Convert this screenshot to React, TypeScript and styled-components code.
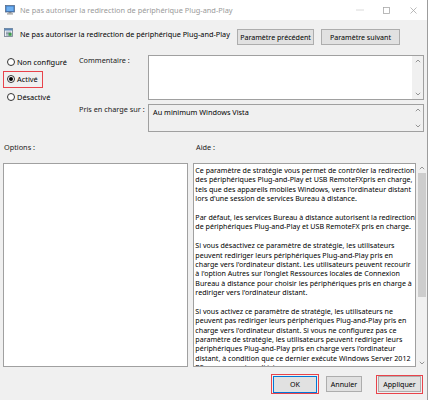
import styled, { createGlobalStyle } from "styled-components";

const GlobalStyle = createGlobalStyle`
  html, body {
    margin: 0;
    padding: 0;
    background: #ffffff;
  }
  body {
    font-family: "Noto Sans", "Open Sans", sans-serif;
    font-size: 7.1px;
    color: #000;
  }
  * {
    box-sizing: border-box;
  }
`;

const Window = styled.div`
  width: 428px;
  height: 400px;
  background: #f0f0f0;
  border-right: 1px solid #9c9c9c;
  display: flex;
  flex-direction: column;
  overflow: hidden;
`;

const TitleBar = styled.div`
  height: 20px;
  flex: none;
  background: #ffffff;
  display: flex;
  align-items: center;
  padding-left: 5px;
`;

const TitleText = styled.span`
  margin-left: 5px;
  color: #9a9a9a;
  font-size: 7.4px;
  flex: 1;
  white-space: nowrap;
`;

const Control = styled.div`
  width: 27px;
  height: 20px;
  display: flex;
  align-items: center;
  justify-content: center;
`;

const HeaderRow = styled.div`
  height: 34px;
  flex: none;
  display: flex;
  align-items: flex-start;
  padding: 8px 0 0 4px;
`;

const PolicyName = styled.span`
  margin-left: 7px;
  margin-top: 0.5px;
  font-size: 7.3px;
  white-space: nowrap;
  flex: 1;
`;

const NavButtons = styled.div`
  display: flex;
  gap: 7px;
  margin-top: 1px;
  margin-right: 27px;
`;

const Button = styled.button<{ $w: number; $default?: boolean }>`
  width: ${(p) => p.$w}px;
  height: ${(p) => (p.$default ? 17 : 16)}px;
  padding: 0;
  font-family: inherit;
  font-size: 7.1px;
  color: #000;
  background: #e1e1e1;
  border: 1px solid ${(p) => (p.$default ? "#0078d7" : "#adadad")};
  display: flex;
  align-items: center;
  justify-content: center;
  white-space: nowrap;
`;

const Upper = styled.div`
  display: grid;
  grid-template-columns: 79px 69px 276px;
  grid-template-rows: 45px 28px;
  row-gap: 4px;
  padding-top: 1px;
`;

const RadioList = styled.div`
  grid-row: 1 / span 2;
  display: flex;
  flex-direction: column;
  margin-top: -2px;
`;

const RadioItem = styled.label<{ $marked?: boolean }>`
  display: flex;
  align-items: center;
  width: fit-content;
  height: 17.5px;
  margin-left: 3px;
  padding: 0 4.5px 0 2.5px;
  border: 1.5px solid ${(p) => (p.$marked ? "#e8434b" : "transparent")};
  white-space: nowrap;
  font-size: 7.4px;
`;

const RadioDot = styled.span<{ $on?: boolean }>`
  width: 8px;
  height: 8px;
  margin-right: 2.5px;
  border-radius: 50%;
  border: 1px solid #333;
  background: #fff;
  display: flex;
  align-items: center;
  justify-content: center;
  &::after {
    content: "";
    width: 4px;
    height: 4px;
    border-radius: 50%;
    background: ${(p) => (p.$on ? "#000" : "transparent")};
  }
`;

const FieldLabel = styled.div`
  font-size: 7.3px;
  white-space: nowrap;
  color: #1a1a1a;
`;

const Field = styled.div<{ $readonly?: boolean }>`
  display: flex;
  background: ${(p) => (p.$readonly ? "#f0f0f0" : "#ffffff")};
  border: 1px solid #a0a0a0;
`;

const FieldText = styled.div`
  flex: 1;
  padding: 2px 4px;
  font-size: 7.3px;
`;

const ScrollBar = styled.div`
  width: 11px;
  flex: none;
  background: #f0f0f0;
  display: flex;
  flex-direction: column;
  align-items: center;
  justify-content: space-between;
  padding: 3px 0;
`;

const Thumb = styled.div`
  width: 8px;
  height: 124px;
  margin-top: 3px;
  background: #cdcdcd;
`;

const SectionLabels = styled.div`
  display: flex;
  padding: 10px 0 0 4px;
  height: 31px;
  flex: none;
  font-size: 7.3px;
  color: #1a1a1a;
`;

const OptionsLabel = styled.span`
  width: 192px;
`;

const Lower = styled.div`
  display: flex;
  gap: 5px;
  padding-left: 3px;
  height: 204px;
  flex: none;
`;

const OptionsBox = styled.div`
  width: 187px;
  background: #ffffff;
  border: 1px solid #a0a0a0;
`;

const HelpPanel = styled.div`
  flex: 1;
  display: flex;
`;

const HelpBox = styled.div`
  flex: 1;
  background: #ffffff;
  border: 1px solid #a0a0a0;
  padding: 2px 0 0 1.5px;
  overflow: hidden;
`;

const HelpLine = styled.div`
  height: 9.4px;
  line-height: 9.4px;
  white-space: nowrap;
  font-size: 7.1px;
`;

const HelpScroll = styled.div`
  width: 11px;
  display: flex;
  flex-direction: column;
  align-items: center;
  background: #f0f0f0;
  padding: 3px 0 2px;
`;

const Spacer = styled.div`
  flex: 1;
`;

const Footer = styled.div`
  display: flex;
  justify-content: flex-end;
  align-items: center;
  padding: 7px 4px 0 0;
  gap: 5px;
`;

const Mark = styled.div<{ $on?: boolean }>`
  padding: 0.5px 1px;
  border: 1.5px solid ${(p) => (p.$on ? "#e8434b" : "transparent")};
  margin-right: ${(p) => (p.$on ? 0 : 7)}px;
`;

function Chevron({ up }: { up?: boolean }) {
  return (
    <svg width="6" height="4" viewBox="0 0 6 4">
      <path
        d={up ? "M0.8 3.2 L3 1 L5.2 3.2" : "M0.8 0.8 L3 3 L5.2 0.8"}
        fill="none"
        stroke="#8a8a8a"
        strokeWidth="0.9"
      />
    </svg>
  );
}

function MonitorIcon() {
  return (
    <svg width="10" height="10" viewBox="0 0 10 10">
      <rect x="0.5" y="0.5" width="9" height="6.5" fill="#3b78c4" stroke="#5a6f8c" strokeWidth="0.8" />
      <rect x="1.5" y="1.5" width="7" height="4.5" fill="#6fb0f0" />
      <rect x="3.5" y="7.2" width="3" height="1" fill="#7c7c7c" />
      <rect x="2" y="8.3" width="6" height="1.2" fill="#9a9a9a" />
    </svg>
  );
}

function PolicyIcon() {
  return (
    <svg width="9" height="9" viewBox="0 0 9 9">
      <rect x="0.5" y="0.5" width="8" height="8" fill="#e9eef4" stroke="#6e7b8a" strokeWidth="0.8" />
      <rect x="0.5" y="0.5" width="8" height="2" fill="#5d87b6" />
      <path d="M2 4.2 H7 M2 5.6 H7 M2 7 H5" stroke="#5c6f84" strokeWidth="0.7" />
      <rect x="4.6" y="4.8" width="3" height="3" fill="#3d9c4c" />
    </svg>
  );
}

const helpLines = [
  "Ce paramètre de stratégie vous permet de contrôler la redirection",
  "des périphériques Plug-and-Play et USB RemoteFXpris en charge,",
  "tels que des appareils mobiles Windows, vers l'ordinateur distant",
  "lors d'une session de services Bureau à distance.",
  "",
  "Par défaut, les services Bureau à distance autorisent la redirection",
  "de périphériques Plug-and-Play et USB RemoteFX pris en charge.",
  "",
  "Si vous désactivez ce paramètre de stratégie, les utilisateurs",
  "peuvent rediriger leurs périphériques Plug-and-Play pris en",
  "charge vers l'ordinateur distant. Les utilisateurs peuvent recourir",
  "à l'option Autres sur l'onglet Ressources locales de Connexion",
  "Bureau à distance pour choisir les périphériques pris en charge à",
  "rediriger vers l'ordinateur distant.",
  "",
  "Si vous activez ce paramètre de stratégie, les utilisateurs ne",
  "peuvent pas rediriger leurs périphériques Plug-and-Play pris en",
  "charge vers l'ordinateur distant. Si vous ne configurez pas ce",
  "paramètre de stratégie, les utilisateurs peuvent rediriger leurs",
  "périphériques Plug-and-Play pris en charge vers l'ordinateur",
  "distant, à condition que ce dernier exécute Windows Server 2012",
  "R2 ou une version ultérieure.",
];

const title = "Ne pas autoriser la redirection de périphérique Plug-and-Play";

export default function App() {
  return (
    <>
      <GlobalStyle />
      <Window>
        <TitleBar>
          <MonitorIcon />
          <TitleText>{title}</TitleText>
          <Control>
            <svg width="8" height="2" viewBox="0 0 8 2">
              <path d="M0 1 H8" stroke="#d0d0d0" strokeWidth="0.8" />
            </svg>
          </Control>
          <Control>
            <svg width="7" height="7" viewBox="0 0 7 7">
              <rect x="0.5" y="0.5" width="6" height="6" fill="none" stroke="#a8a8a8" strokeWidth="0.8" />
            </svg>
          </Control>
          <Control>
            <svg width="7" height="7" viewBox="0 0 7 7">
              <path d="M0.5 0.5 L6.5 6.5 M6.5 0.5 L0.5 6.5" stroke="#a8a8a8" strokeWidth="0.8" />
            </svg>
          </Control>
        </TitleBar>

        <HeaderRow>
          <PolicyIcon />
          <PolicyName>{title}</PolicyName>
          <NavButtons>
            <Button $w={77}>Paramètre précédent</Button>
            <Button $w={79}>Paramètre suivant</Button>
          </NavButtons>
        </HeaderRow>

        <Upper>
          <RadioList>
            <RadioItem>
              <RadioDot />
              Non configuré
            </RadioItem>
            <RadioItem $marked>
              <RadioDot $on />
              Activé
            </RadioItem>
            <RadioItem>
              <RadioDot />
              Désactivé
            </RadioItem>
          </RadioList>
          <FieldLabel>Commentaire :</FieldLabel>
          <Field>
            <FieldText />
            <ScrollBar>
              <Chevron up />
              <Chevron />
            </ScrollBar>
          </Field>
          <FieldLabel>Pris en charge sur :</FieldLabel>
          <Field $readonly>
            <FieldText>Au minimum Windows Vista</FieldText>
            <ScrollBar>
              <Chevron up />
              <Chevron />
            </ScrollBar>
          </Field>
        </Upper>

        <SectionLabels>
          <OptionsLabel>Options :</OptionsLabel>
          <span>Aide :</span>
        </SectionLabels>

        <Lower>
          <OptionsBox />
          <HelpPanel>
            <HelpBox>
              {helpLines.map((line, i) => (
                <HelpLine key={i}>{line || "\u00a0"}</HelpLine>
              ))}
            </HelpBox>
            <HelpScroll>
              <Chevron up />
              <Thumb />
              <Spacer />
              <Chevron />
            </HelpScroll>
          </HelpPanel>
        </Lower>

        <Footer>
          <Mark $on>
            <Button $w={44} $default>
              OK
            </Button>
          </Mark>
          <Mark>
            <Button $w={36}>Annuler</Button>
          </Mark>
          <Mark $on>
            <Button $w={43}>Appliquer</Button>
          </Mark>
        </Footer>
      </Window>
    </>
  );
}
